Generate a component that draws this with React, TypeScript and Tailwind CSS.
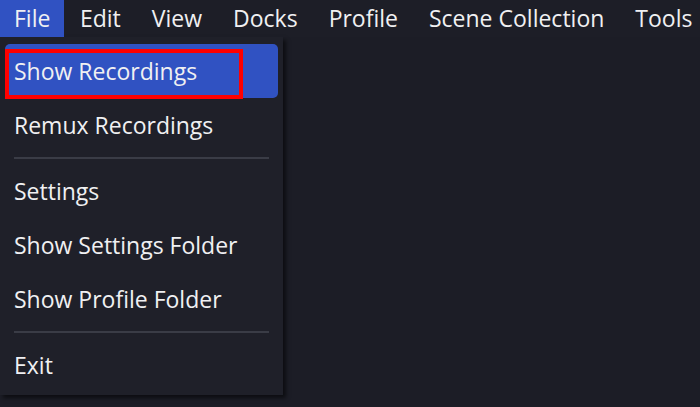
import React from "react";

const MENUS = ["File", "Edit", "View", "Docks", "Profile", "Scene Collection", "Tools"];

function Item({ label, active, boxed }: { label: string; active?: boolean; boxed?: boolean }) {
  return (
    <div className="relative px-[5px]">
      <div
        className={`h-[54px] flex items-center px-[9px] rounded-[5px] ${
          active ? "bg-[#3052c2]" : ""
        }`}
      >
        {label}
      </div>
      {boxed && (
        <div className="absolute left-[5px] top-[5px] w-[238px] h-[50px] border-[4px] border-[#ff0000]" />
      )}
    </div>
  );
}

function Sep() {
  return <div className="mx-[14px] my-[5px] h-[2px] bg-[#3a3c46]" />;
}

export default function App() {
  return (
    <div
      className="w-[700px] h-[407px] bg-[#1c1d26] text-[#f0f0f2] text-[23px] overflow-hidden"
      style={{ fontFamily: '"Open Sans", "Noto Sans", sans-serif' }}
    >
      {/* Menu bar */}
      <div className="h-[37px] flex items-center bg-[#1d1e27] whitespace-nowrap">
        {MENUS.map((m, i) => (
          <div
            key={m}
            className={`h-full flex items-center ${
              i === 0 ? "px-[14px] bg-[#3052c2]" : "px-[15.5px]"
            }`}
          >
            {m}
          </div>
        ))}
      </div>

      {/* Dropdown */}
      <div className="w-[283px] bg-[#1f2029] pt-[7px] pb-[3px] shadow-[3px_3px_4px_rgba(0,0,0,0.55)]">
        <Item label="Show Recordings" active boxed />
        <Item label="Remux Recordings" />
        <Sep />
        <Item label="Settings" />
        <Item label="Show Settings Folder" />
        <Item label="Show Profile Folder" />
        <Sep />
        <Item label="Exit" />
      </div>
    </div>
  );
}
